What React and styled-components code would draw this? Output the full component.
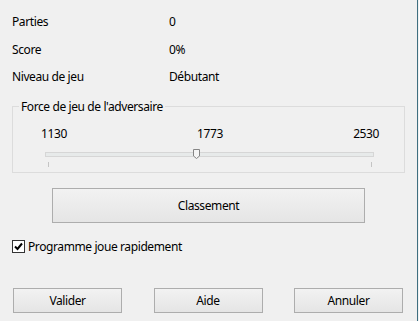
import React from 'react'
import styled, { createGlobalStyle } from 'styled-components'

const GlobalStyle = createGlobalStyle`
  html, body {
    margin: 0;
    padding: 0;
    background: #f0f0f0;
  }
  body {
    font-family: "Noto Sans", "Segoe UI", sans-serif;
    font-size: 12px;
    letter-spacing: -0.4px;
    color: #000;
  }
`

const Dialog = styled.div`
  width: 418px;
  height: 321px;
  box-sizing: border-box;
  background: #f0f0f0;
  border-right: 1px solid #3f6f80;
  padding: 8px 0 0 12px;
  display: flex;
  flex-direction: column;
`

const InfoGrid = styled.div`
  display: grid;
  grid-template-columns: 157px auto;
  grid-auto-rows: 27.5px;
  line-height: 28px;
`

const Cell = styled.div`
  white-space: nowrap;
`

const GroupBox = styled.fieldset`
  margin: 8px 0 0 0;
  padding: 0;
  width: 393px;
  height: 74px;
  box-sizing: border-box;
  border: 1px solid #dcdcdc;
  min-width: 0;
`

const GroupTitle = styled.legend`
  margin-left: 6px;
  padding: 0 2px;
  line-height: 15px;
`

const SliderLabels = styled.div`
  display: flex;
  justify-content: space-between;
  margin-top: 12px;
  padding: 0 25px 0 28px;
  line-height: 15px;
`

const SliderArea = styled.div`
  position: relative;
  margin: 11px 0 0 32px;
  width: 329px;
`

const Track = styled.div`
  height: 5px;
  box-sizing: border-box;
  border: 1px solid #d6d6d6;
  background: #e7eaea;
`

const Thumb = styled.svg`
  position: absolute;
  top: -3px;
  margin-left: -3px;
`

const Ticks = styled.div`
  display: flex;
  justify-content: space-between;
  padding: 0 2px 0 3px;
  margin-top: 5px;
`

const Tick = styled.span`
  display: block;
  width: 1px;
  height: 5px;
  background: #c4c4c4;
`

const Button = styled.button`
  font-family: inherit;
  font-size: 12px;
  letter-spacing: inherit;
  color: #000;
  width: ${p => p.$width}px;
  height: ${p => p.$height}px;
  border: 1px solid #adadad;
  background: linear-gradient(#f2f2f2, #e5e5e5);
  padding: 0;
  margin: 0;
`

const WideButton = styled(Button)`
  margin: 15px 0 0 40px;
`

const CheckRow = styled.label`
  display: flex;
  align-items: center;
  gap: 3px;
  margin-top: 16px;
  line-height: 15px;
`

const Box = styled.span`
  width: 13px;
  height: 13px;
  box-sizing: border-box;
  border: 1px solid #333;
  background: #fff;
  display: flex;
  align-items: center;
  justify-content: center;
`

const Footer = styled.div`
  display: flex;
  justify-content: space-between;
  margin: 34px 0 0 1px;
  width: 390px;
`

const MIN = 1130
const MAX = 2530
const VALUE = 1773

export default function App () {
  const pct = (VALUE - MIN) / (MAX - MIN)
  return (
    <Dialog>
      <GlobalStyle />
      <InfoGrid>
        <Cell>Parties</Cell><Cell>0</Cell>
        <Cell>Score</Cell><Cell>0%</Cell>
        <Cell>Niveau de jeu</Cell><Cell>Débutant</Cell>
      </InfoGrid>
      <GroupBox>
        <GroupTitle>Force de jeu de l'adversaire</GroupTitle>
        <SliderLabels>
          <span>{MIN}</span>
          <span>{VALUE}</span>
          <span>{MAX}</span>
        </SliderLabels>
        <SliderArea>
          <Track />
          <Thumb style={{ left: `${Math.round(pct * 327) + 1}px` }} width='7' height='10' viewBox='0 0 7 10'>
            <path d='M0.5 0.5 H6.5 V7 L3.5 9.5 L0.5 7 Z' fill='#f4f4f4' stroke='#858585' strokeWidth='1' />
          </Thumb>
          <Ticks>
            <Tick />
            <Tick />
          </Ticks>
        </SliderArea>
      </GroupBox>
      <WideButton $width={313} $height={35}>Classement</WideButton>
      <CheckRow>
        <Box>
          <svg width='9' height='9' viewBox='0 0 9 9'>
            <path d='M1 4.5 L3.5 7 L8 1.5' fill='none' stroke='#000' strokeWidth='2' />
          </svg>
        </Box>
        Programme joue rapidement
      </CheckRow>
      <Footer>
        <Button $width={109} $height={25}>Valider</Button>
        <Button $width={109} $height={25}>Aide</Button>
        <Button $width={109} $height={25}>Annuler</Button>
      </Footer>
    </Dialog>
  )
}
